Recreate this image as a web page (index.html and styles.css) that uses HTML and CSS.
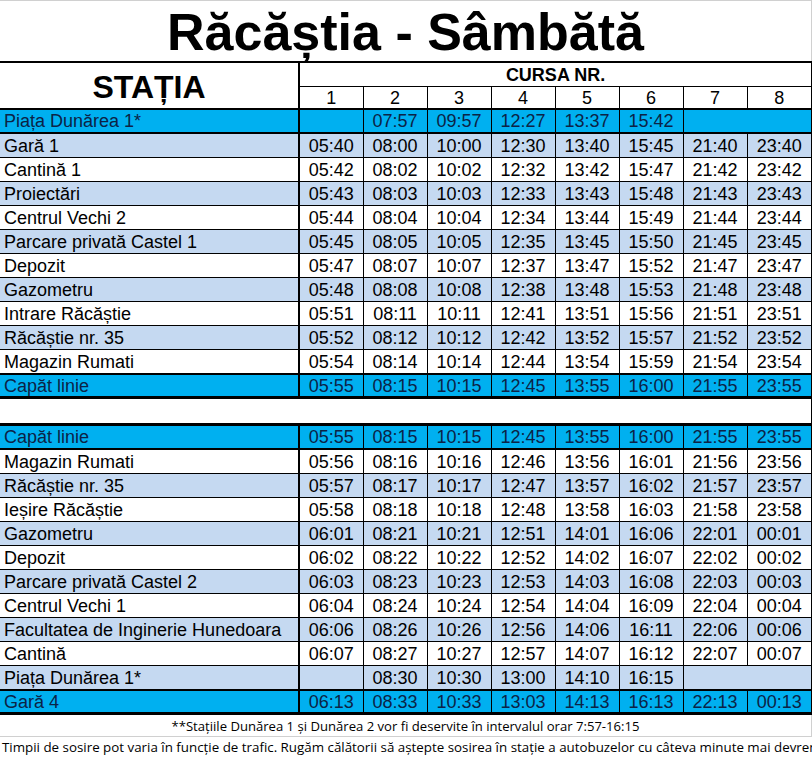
FILE: index.html
```html
<!DOCTYPE html>
<html lang="ro">
<head>
<meta charset="utf-8">
<title>Răcăștia - Sâmbătă</title>
<link rel="stylesheet" href="styles.css">
</head>
<body>
<div class="sheet">
  <h1 class="title">Răcăștia - Sâmbătă</h1>
  <table class="tt">
    <colgroup>
      <col class="c-st">
      <col class="c-t"><col class="c-t"><col class="c-t"><col class="c-t">
      <col class="c-t"><col class="c-t"><col class="c-t"><col class="c-t8">
    </colgroup>
    <thead>
      <tr class="h1">
        <th class="statia" rowspan="2">STAȚIA</th>
        <th class="cursa last" colspan="8">CURSA NR.</th>
      </tr>
      <tr class="h2">
        <th>1</th><th>2</th><th>3</th><th>4</th><th>5</th><th>6</th><th>7</th><th class="last">8</th>
      </tr>
    </thead>
    <tbody>
      <tr class="cyan"><td class="st">Piața Dunărea 1*</td><td></td><td>07:57</td><td>09:57</td><td>12:27</td><td>13:37</td><td>15:42</td><td class="last" colspan="2"></td></tr>
      <tr class="lb"><td class="st">Gară 1</td><td>05:40</td><td>08:00</td><td>10:00</td><td>12:30</td><td>13:40</td><td>15:45</td><td>21:40</td><td class="last">23:40</td></tr>
      <tr><td class="st">Cantină 1</td><td>05:42</td><td>08:02</td><td>10:02</td><td>12:32</td><td>13:42</td><td>15:47</td><td>21:42</td><td class="last">23:42</td></tr>
      <tr class="lb"><td class="st">Proiectări</td><td>05:43</td><td>08:03</td><td>10:03</td><td>12:33</td><td>13:43</td><td>15:48</td><td>21:43</td><td class="last">23:43</td></tr>
      <tr><td class="st">Centrul Vechi 2</td><td>05:44</td><td>08:04</td><td>10:04</td><td>12:34</td><td>13:44</td><td>15:49</td><td>21:44</td><td class="last">23:44</td></tr>
      <tr class="lb"><td class="st">Parcare privată Castel 1</td><td>05:45</td><td>08:05</td><td>10:05</td><td>12:35</td><td>13:45</td><td>15:50</td><td>21:45</td><td class="last">23:45</td></tr>
      <tr><td class="st">Depozit</td><td>05:47</td><td>08:07</td><td>10:07</td><td>12:37</td><td>13:47</td><td>15:52</td><td>21:47</td><td class="last">23:47</td></tr>
      <tr class="lb"><td class="st">Gazometru</td><td>05:48</td><td>08:08</td><td>10:08</td><td>12:38</td><td>13:48</td><td>15:53</td><td>21:48</td><td class="last">23:48</td></tr>
      <tr><td class="st">Intrare Răcăștie</td><td>05:51</td><td>08:11</td><td>10:11</td><td>12:41</td><td>13:51</td><td>15:56</td><td>21:51</td><td class="last">23:51</td></tr>
      <tr class="lb"><td class="st">Răcăștie nr. 35</td><td>05:52</td><td>08:12</td><td>10:12</td><td>12:42</td><td>13:52</td><td>15:57</td><td>21:52</td><td class="last">23:52</td></tr>
      <tr><td class="st">Magazin Rumati</td><td>05:54</td><td>08:14</td><td>10:14</td><td>12:44</td><td>13:54</td><td>15:59</td><td>21:54</td><td class="last">23:54</td></tr>
      <tr class="cyan endrow"><td class="st">Capăt linie</td><td>05:55</td><td>08:15</td><td>10:15</td><td>12:45</td><td>13:55</td><td>16:00</td><td>21:55</td><td class="last">23:55</td></tr>
      <tr class="gap"><td class="last" colspan="9"></td></tr>
      <tr class="cyan startrow"><td class="st">Capăt linie</td><td>05:55</td><td>08:15</td><td>10:15</td><td>12:45</td><td>13:55</td><td>16:00</td><td>21:55</td><td class="last">23:55</td></tr>
      <tr><td class="st">Magazin Rumati</td><td>05:56</td><td>08:16</td><td>10:16</td><td>12:46</td><td>13:56</td><td>16:01</td><td>21:56</td><td class="last">23:56</td></tr>
      <tr class="lb"><td class="st">Răcăștie nr. 35</td><td>05:57</td><td>08:17</td><td>10:17</td><td>12:47</td><td>13:57</td><td>16:02</td><td>21:57</td><td class="last">23:57</td></tr>
      <tr><td class="st">Ieșire Răcăștie</td><td>05:58</td><td>08:18</td><td>10:18</td><td>12:48</td><td>13:58</td><td>16:03</td><td>21:58</td><td class="last">23:58</td></tr>
      <tr class="lb"><td class="st">Gazometru</td><td>06:01</td><td>08:21</td><td>10:21</td><td>12:51</td><td>14:01</td><td>16:06</td><td>22:01</td><td class="last">00:01</td></tr>
      <tr><td class="st">Depozit</td><td>06:02</td><td>08:22</td><td>10:22</td><td>12:52</td><td>14:02</td><td>16:07</td><td>22:02</td><td class="last">00:02</td></tr>
      <tr class="lb"><td class="st">Parcare privată Castel 2</td><td>06:03</td><td>08:23</td><td>10:23</td><td>12:53</td><td>14:03</td><td>16:08</td><td>22:03</td><td class="last">00:03</td></tr>
      <tr><td class="st">Centrul Vechi 1</td><td>06:04</td><td>08:24</td><td>10:24</td><td>12:54</td><td>14:04</td><td>16:09</td><td>22:04</td><td class="last">00:04</td></tr>
      <tr class="lb"><td class="st">Facultatea de Inginerie Hunedoara</td><td>06:06</td><td>08:26</td><td>10:26</td><td>12:56</td><td>14:06</td><td>16:11</td><td>22:06</td><td class="last">00:06</td></tr>
      <tr><td class="st">Cantină</td><td>06:07</td><td>08:27</td><td>10:27</td><td>12:57</td><td>14:07</td><td>16:12</td><td>22:07</td><td class="last">00:07</td></tr>
      <tr class="lb"><td class="st">Piața Dunărea 1*</td><td></td><td>08:30</td><td>10:30</td><td>13:00</td><td>14:10</td><td>16:15</td><td class="last" colspan="2"></td></tr>
      <tr class="cyan endrow"><td class="st">Gară 4</td><td>06:13</td><td>08:33</td><td>10:33</td><td>13:03</td><td>14:13</td><td>16:13</td><td>22:13</td><td class="last">00:13</td></tr>
    </tbody>
  </table>
  <p class="note">**Stațiile Dunărea 1 și Dunărea 2 vor fi deservite în intervalul orar 7:57-16:15</p>
  <p class="note2">Timpii de sosire pot varia în funcție de trafic. Rugăm călătorii să aștepte sosirea în stație a autobuzelor cu câteva minute mai devreme.</p>
</div>
</body>
</html>
```
FILE: styles.css
```css
html, body {
  margin: 0;
  padding: 0;
  background: #ffffff;
}

.sheet {
  width: 812px;
  height: 757px;
  overflow: hidden;
  font-family: "Liberation Sans", Arial, sans-serif;
  color: #000;
}

.title {
  margin: 0;
  box-sizing: border-box;
  height: 61px;
  border-top: 1px solid #d0d0d0;
  border-right: 1px solid #d0d0d0;
  font-size: 52px;
  font-weight: bold;
  line-height: 62px;
  text-align: center;
  white-space: nowrap;
}

.tt {
  width: 812px;
  table-layout: fixed;
  border-collapse: collapse;
  font-size: 18px;
}

.c-st { width: 299px; }
.c-t { width: 64px; }
.c-t8 { width: 65px; }

.tt th,
.tt td {
  border: 1px solid #000;
  padding: 0;
  text-align: center;
  white-space: nowrap;
  overflow: hidden;
  line-height: 20px;
}

.tt th { font-weight: normal; }

.tt .last { border-right: 2px solid #000; }

.h1 th { border-top: 2px solid #000; height: 23px; }
.h2 th { height: 21px; border-bottom: 2px solid #000; }

.tt .statia {
  font-size: 32px;
  font-weight: bold;
  border-left: none;
  border-right: 2px solid #000;
  border-bottom: 2px solid #000;
  padding-top: 2px;
}

.tt .cursa {
  font-weight: bold;
  font-size: 18px;
}

.tt tbody td { height: 23px; }

.tt td.st {
  text-align: left;
  padding-left: 4px;
  border-left: none;
  border-right: 2px solid #000;
}

.lb td { background: #c5d9f1; }

.tt .cyan td {
  height: 22px;
  background: #00b0f0;
  color: #0c2346;
  border-top: 2px solid #000;
  border-bottom: 2px solid #000;
}

.tt .endrow td { border-bottom: 3px solid #000; height: 21px; }
.tt .startrow td { border-top: 3px solid #000; height: 22px; }

.tt .gap td {
  height: 24px;
  border-left: none;
  background: #fff;
}

.note {
  margin: 0;
  box-sizing: border-box;
  height: 22px;
  border-bottom: 1px solid #d0d0d0;
  border-right: 1px solid #d0d0d0;
  font-family: "Open Sans", sans-serif;
  font-size: 13.1px;
  line-height: 22px;
  text-align: center;
  white-space: nowrap;
}

.note2 {
  margin: 0;
  height: 21px;
  padding-left: 2px;
  font-family: "Open Sans", sans-serif;
  font-size: 13.35px;
  line-height: 20px;
  white-space: nowrap;
  overflow: hidden;
}
```
